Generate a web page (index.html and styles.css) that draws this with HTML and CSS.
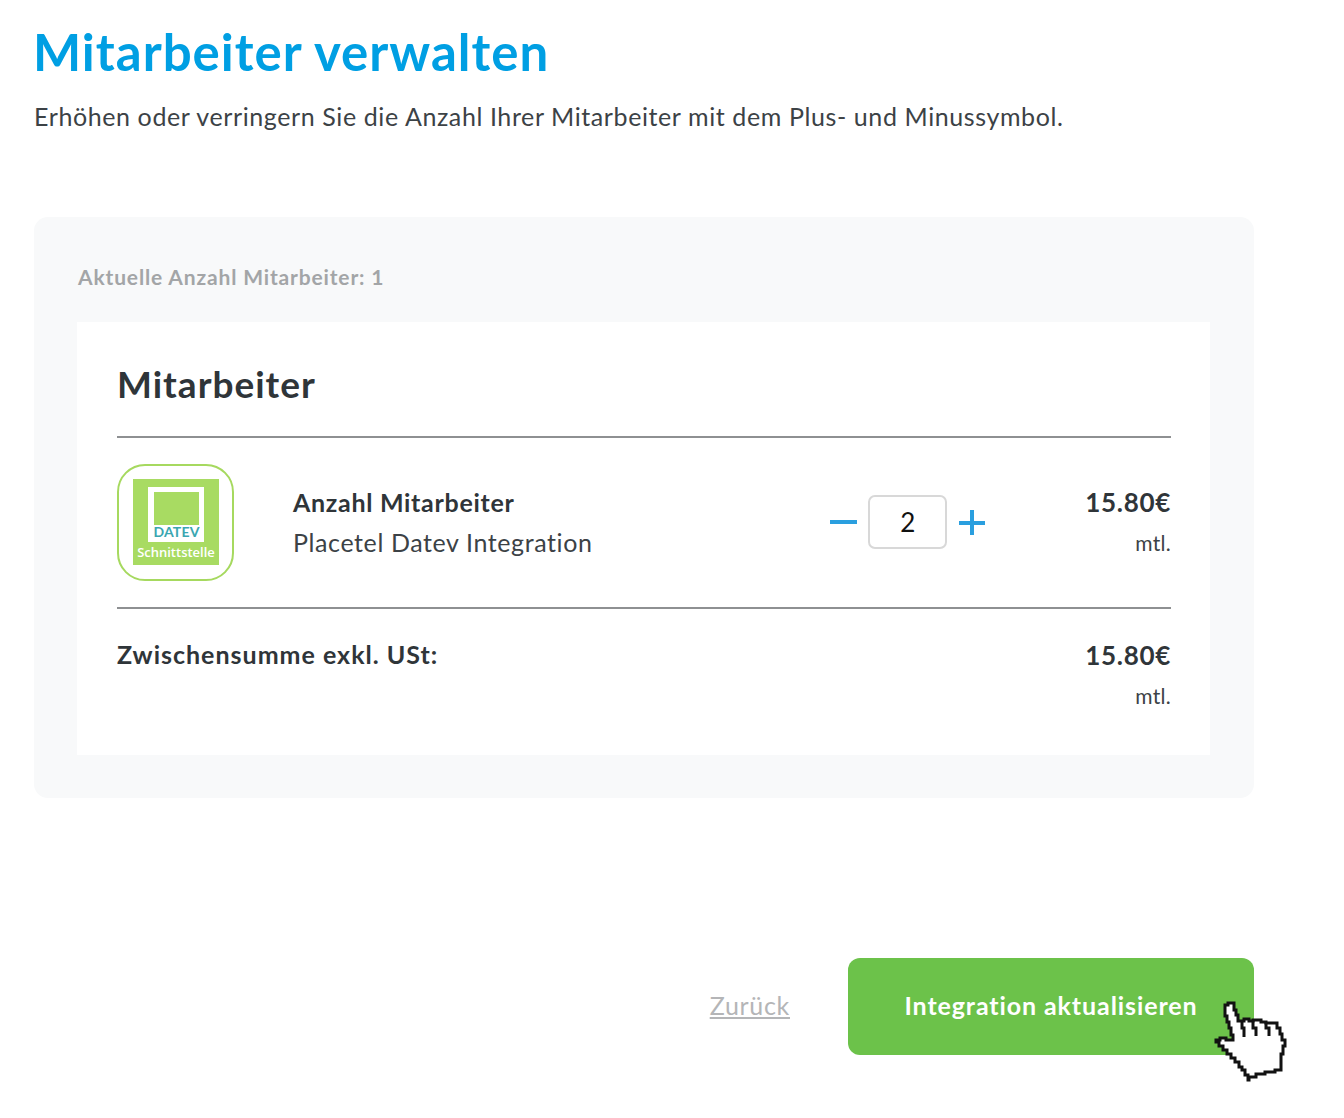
FILE: index.html
```html
<!DOCTYPE html>
<html lang="de">
<head>
<meta charset="utf-8">
<title>Mitarbeiter verwalten</title>
<link rel="stylesheet" href="styles.css">
</head>
<body>
<main class="page">
  <h1 class="title">Mitarbeiter verwalten</h1>
  <p class="lead">Erhöhen oder verringern Sie die Anzahl Ihrer Mitarbeiter mit dem Plus- und Minussymbol.</p>
  <section class="panel">
    <div class="current">Aktuelle Anzahl Mitarbeiter: 1</div>
    <div class="sheet">
      <h2 class="sheet-title">Mitarbeiter</h2>
      <div class="item">
        <div class="logo">
          <svg width="117" height="117" viewBox="0 0 117 117">
            <rect x="1" y="1" width="115" height="115" rx="27" fill="#fff" stroke="#a6d95f" stroke-width="2"/>
            <rect x="16" y="15" width="86" height="86" fill="#a8db62"/>
            <rect x="31" y="23" width="56" height="55" fill="#fff"/>
            <rect x="37" y="28" width="45" height="33" fill="#a8db62"/>
            <text x="59.500" y="73" text-anchor="middle" class="logo-datev">DATEV</text>
            <text x="59" y="93" text-anchor="middle" class="logo-caption">Schnittstelle</text>
          </svg>
        </div>
        <div class="item-text">
          <div class="item-name">Anzahl Mitarbeiter</div>
          <div class="item-desc">Placetel Datev Integration</div>
        </div>
        <div class="stepper">
          <svg class="step-icon" width="27" height="28" viewBox="0 0 27 28"><rect x="0" y="12" width="27" height="4" fill="#2a9fdf"/></svg>
          <div class="qty">2</div>
          <svg class="step-icon" width="26" height="28" viewBox="0 0 26 28"><rect x="0" y="13" width="26" height="4" fill="#2a9fdf"/><rect x="11" y="2" width="4" height="25" fill="#2a9fdf"/></svg>
        </div>
        <div class="price">
          <div class="amount">15.80€</div>
          <div class="period">mtl.</div>
        </div>
      </div>
      <div class="subtotal">
        <div class="subtotal-label">Zwischensumme exkl. USt:</div>
        <div class="price">
          <div class="amount">15.80€</div>
          <div class="period">mtl.</div>
        </div>
      </div>
    </div>
  </section>
  <div class="actions">
    <a class="back" href="#">Zurück</a>
    <div class="cta-wrap">
      <button class="cta" type="button">Integration aktualisieren</button>
      <svg class="cursor" width="110" height="110" viewBox="0 0 110 110">
        <path d="M35 28 V25 H38 V23 H44 V30 H46 V35 H48 V41 H54 V39 H59 V41 H63 V40 H71 V42 H76 V43 H87 V48 H90 V54 H92 V60 H95 V66 H93 V74 H91 V90 H85 V92 H75 V94 H66 V97 H59 V100 H58 V95 H55 V90 H52 V87 H49 V82 H45 V78 H41 V74 H37 V70 H33 V66 H29 V62 H26 V60 H30 V58 H36 V60 H43 V55 H41 V48 H39 V42 H37 V36 H35 Z" fill="#fff" stroke="#111" stroke-width="3"/>
        <path d="M52 42 V48 H54 V57 M63 41 V48 H66 V56 M76 43 V48 H79 V56" fill="none" stroke="#111" stroke-width="3"/>
      </svg>
    </div>
  </div>
</main>
</body>
</html>
```
FILE: styles.css
```css
* { box-sizing: border-box; }
html, body { margin: 0; padding: 0; background: #fff; }
body {
  width: 1344px;
  height: 1118px;
  overflow: hidden;
  font-family: "Lato", "Liberation Sans", sans-serif;
  font-variant-ligatures: none;
  color: #2f3539;
}
.page { margin-left: 34px; padding-top: 22px; display: flex; flex-direction: column; width: 1220px; }
.title { margin: 0 0 0 -1px; font-size: 51px; line-height: 60px; font-weight: 700; color: #009fe3; letter-spacing: 1px; }
.lead { margin: 16px 0 0; font-size: 25px; line-height: 36px; color: #3c4246; letter-spacing: .6px; }
.panel {
  margin-top: 83px;
  height: 581px;
  padding: 45px 44px 43px 43px;
  background: #f8f9fa;
  border-radius: 14px;
  display: flex;
  flex-direction: column;
}
.current { margin-left: 1px; font-size: 21px; line-height: 30px; font-weight: 700; color: #a3a5a7; letter-spacing: .85px; }
.sheet { margin-top: 30px; height: 433px; background: #fff; padding: 0 39px 0 40px; }
.sheet-title {
  margin: 0;
  height: 116px;
  padding-top: 37px;
  font-size: 37px;
  line-height: 50px;
  font-weight: 700;
  color: #2f3539;
  letter-spacing: 1px;
  border-bottom: 2px solid #8e9092;
}
.item {
  height: 171px;
  display: flex;
  align-items: center;
  border-bottom: 2px solid #8e9092;
}
.logo { width: 117px; height: 117px; flex: none; }
.logo svg { display: block; }
.logo-datev { font-family: "Lato", sans-serif; font-size: 14px; font-weight: 700; fill: #3aa6b0; letter-spacing: .2px; }
.logo-caption { font-family: "Open Sans", sans-serif; font-size: 13px; font-weight: 600; fill: #fff; }
.item-text { margin-left: 59px; padding-bottom: 2px; flex: 1; }
.item-name { font-size: 25px; line-height: 36px; font-weight: 700; color: #2f3539; letter-spacing: .7px; }
.item-desc { margin-top: 4px; font-size: 25px; line-height: 36px; color: #3c4246; letter-spacing: .6px; }
.stepper { display: flex; align-items: center; margin-right: 100px; padding-bottom: 2px; }
.step-icon { display: block; flex: none; }
.qty {
  width: 79px;
  height: 54px;
  margin: 0 12px 0 11px;
  border: 2px solid #d8d8d8;
  border-radius: 7px;
  background: #fff;
  display: flex;
  align-items: center;
  justify-content: center;
  font-size: 26px;
  color: #111;
}
.price { text-align: right; }
.amount { font-size: 26px; line-height: 36px; font-weight: 700; color: #2f3539; letter-spacing: .7px; }
.period { margin-top: 5px; font-size: 21px; line-height: 36px; color: #3c4246; letter-spacing: .3px; }
.subtotal { display: flex; justify-content: space-between; padding-top: 28px; }
.subtotal-label { font-size: 25px; line-height: 34px; font-weight: 700; letter-spacing: 1px; }
.actions { margin-top: 160px; display: flex; justify-content: flex-end; align-items: center; }
.back { margin-right: 58px; margin-bottom: 4px; font-size: 25px; color: #b4b5b7; text-decoration: underline; letter-spacing: .7px; }
.cta-wrap { position: relative; }
.cta {
  display: block;
  width: 406px;
  height: 97px;
  padding: 0 0 4px;
  border: 0;
  border-radius: 12px;
  background: #6cc24a;
  color: #fff;
  font-family: inherit;
  font-size: 25px;
  font-weight: 700;
  letter-spacing: .9px;
}
.cursor { position: absolute; left: 342px; top: 22px; }
```
